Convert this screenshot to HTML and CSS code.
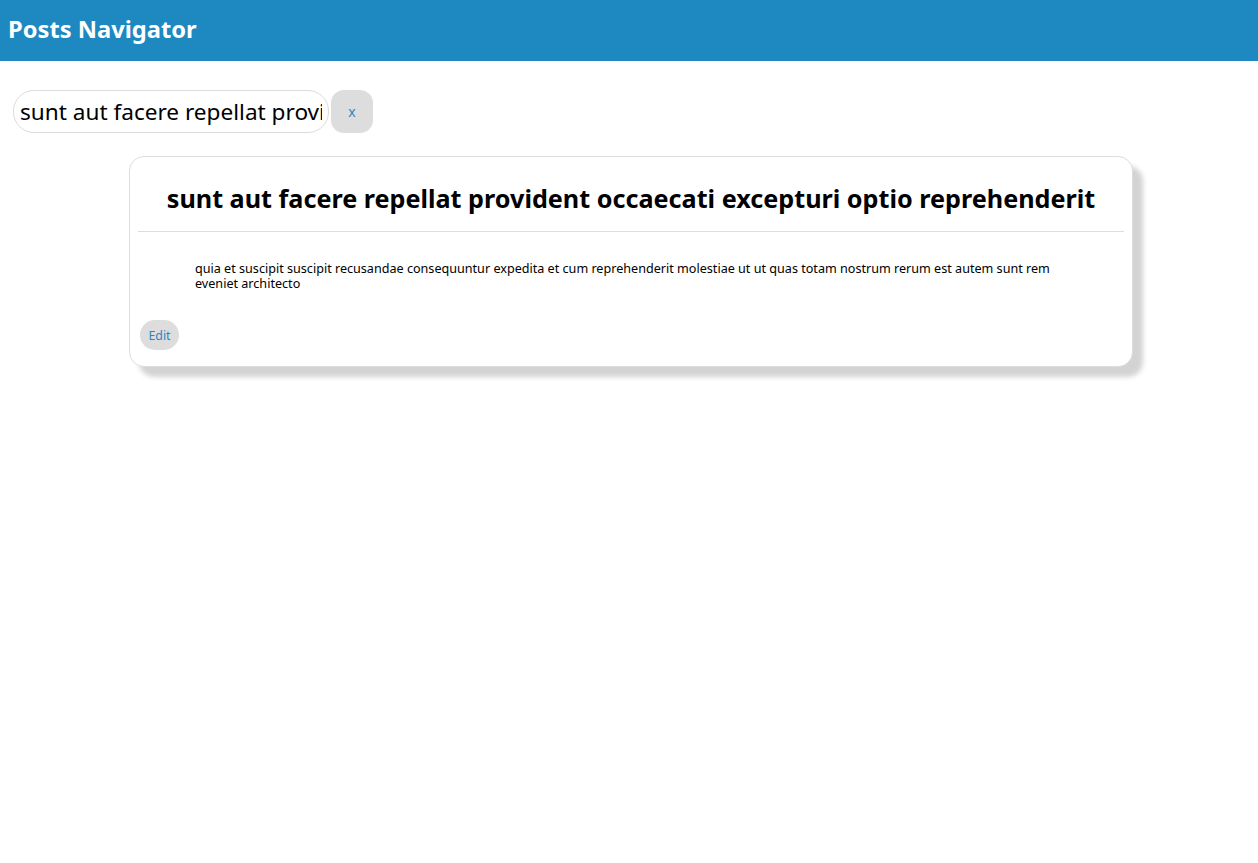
FILE: index.html
```
<!DOCTYPE html>
<html>
<head>
<meta charset="utf-8">
<title>Posts Navigator</title>
<link rel="stylesheet" href="styles.css">
</head>
<body>
<header class="topbar">
  <h1 class="brand">Posts Navigator</h1>
</header>
<main class="page">
  <div class="search">
    <input class="search-input" type="text" value="sunt aut facere repellat provident occaecati excepturi optio reprehenderit">
    <button class="clear-btn" type="button">x</button>
  </div>
  <article class="post-card">
    <h2 class="post-title">sunt aut facere repellat provident occaecati excepturi optio reprehenderit</h2>
    <hr class="divider">
    <p class="post-body">quia et suscipit suscipit recusandae consequuntur expedita et cum reprehenderit molestiae ut ut quas totam nostrum rerum est autem sunt rem eveniet architecto</p>
    <div class="actions">
      <button class="edit-btn" type="button">Edit</button>
    </div>
  </article>
</main>
</body>
</html>
```
FILE: styles.css
```
* { box-sizing: border-box; }

html, body {
  margin: 0;
  padding: 0;
  background: #ffffff;
  font-family: "Noto Sans", "Open Sans", sans-serif;
  color: #000;
}

.topbar {
  height: 61px;
  background: #1e88c0;
  display: flex;
  align-items: center;
  padding: 0 8px;
}

.brand {
  margin: 0;
  color: #ffffff;
  font-size: 23.7px;
  font-weight: 700;
  line-height: 1;
  position: relative;
  top: -1px;
}

.page {
  padding: 29px 8px 40px;
}

.search {
  display: flex;
  gap: 2px;
  margin-left: 5px;
  height: 43px;
}

.search-input {
  width: 316px;
  height: 43px;
  border: 1px solid #dcdcdc;
  border-radius: 21px;
  padding: 0 6px;
  font-family: "Noto Sans", "Open Sans", sans-serif;
  font-size: 22.6px;
  color: #000;
  background: #fff;
  outline: none;
}

.clear-btn {
  width: 42px;
  height: 43px;
  border: none;
  border-radius: 13px;
  background: #dddddd;
  color: #2a86c4;
  font-family: "Noto Sans", "Open Sans", sans-serif;
  font-size: 14px;
  padding: 0;
  cursor: pointer;
}

.post-card {
  width: 1004px;
  margin: 23px 0 0 121px;
  border: 1px solid #dddddd;
  border-radius: 15px;
  padding: 8px;
  background: #fff;
  box-shadow: 10px 10px 5px #d3d3d3;
}

.post-title {
  margin: 16px 0 16px;
  text-align: center;
  font-size: 25.2px;
  font-weight: 700;
  line-height: 34px;
}

.divider {
  margin: 0;
  border: none;
  border-top: 1px solid #dddddd;
  height: 0;
}

.post-body {
  margin: 29px 0 0;
  padding: 0 57px;
  font-size: 12.6px;
  line-height: 15px;
}

.actions {
  margin-top: 29px;
  padding-left: 2px;
  padding-bottom: 8px;
}

.edit-btn {
  display: block;
  height: 30px;
  width: 39px;
  border: none;
  border-radius: 15px;
  background: #dddddd;
  color: #2a86c4;
  font-family: "Noto Sans", "Open Sans", sans-serif;
  font-size: 12.4px;
  padding: 0;
  cursor: pointer;
}
```
